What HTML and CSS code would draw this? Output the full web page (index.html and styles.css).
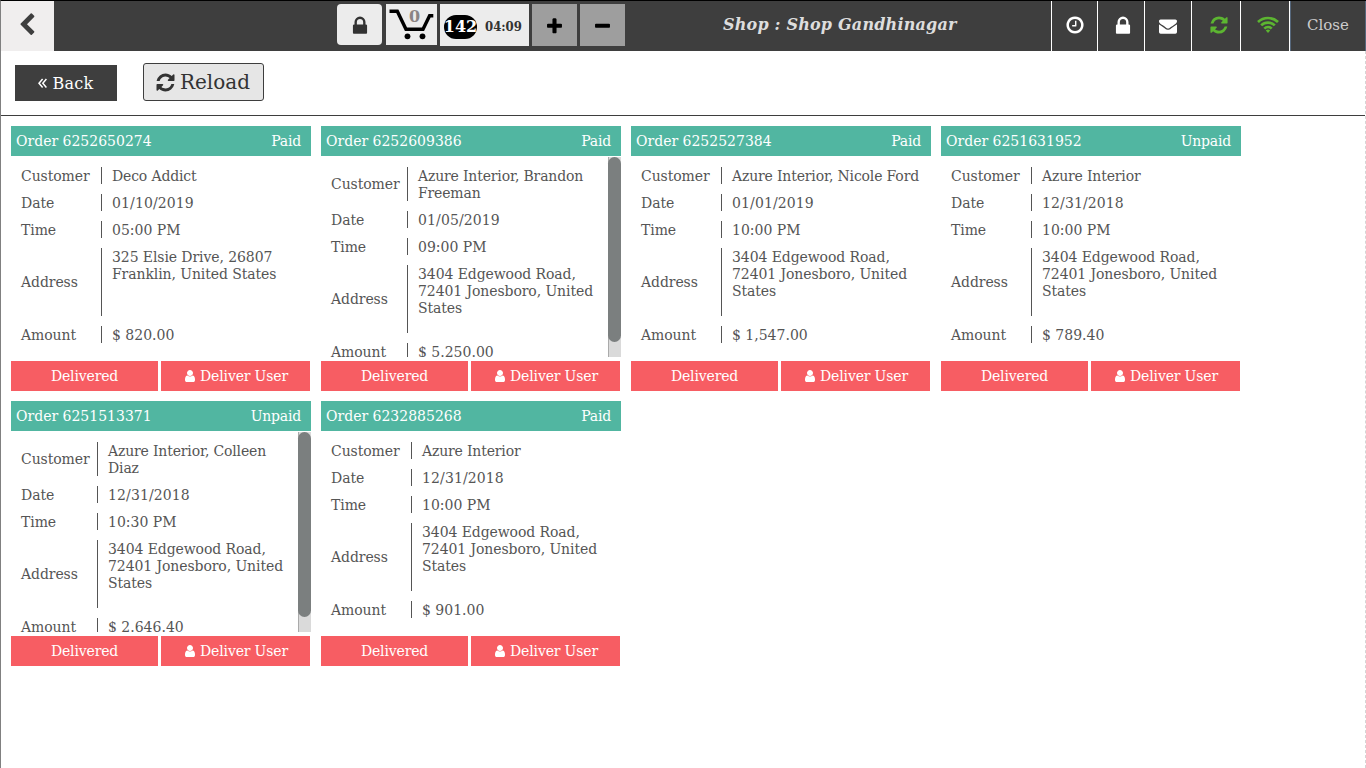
FILE: index.html
```html
<!DOCTYPE html>
<html lang="en">
<head>
<meta charset="utf-8">
<title>Shop Gandhinagar</title>
<link rel="stylesheet" href="styles.css">
</head>
<body>
<svg class="defs" aria-hidden="true">
<symbol id="lock" viewBox="0 0 1792 1792"><path d="M640 768h512v-192q0-106-75-181t-181-75-181 75-75 181v192zm832 96v576q0 40-28 68t-68 28h-960q-40 0-68-28t-28-68v-576q0-40 28-68t68-28h32v-192q0-184 132-316t316-132 316 132 132 316v192h32q40 0 68 28t28 68z"/></symbol>
<symbol id="chevron" viewBox="0 0 1792 1792"><path d="M1427 301l-531 531 531 531q19 19 19 45t-19 45l-166 166q-19 19-45 19t-45-19l-742-742q-19-19-19-45t19-45l742-742q19-19 45-19t45 19l166 166q19 19 19 45t-19 45z"/></symbol>
<symbol id="plus" viewBox="0 0 1792 1792"><path d="M1600 736v192q0 40-28 68t-68 28h-416v416q0 40-28 68t-68 28h-192q-40 0-68-28t-28-68v-416h-416q-40 0-68-28t-28-68v-192q0-40 28-68t68-28h416v-416q0-40 28-68t68-28h192q40 0 68 28t28 68v416h416q40 0 68 28t28 68z"/></symbol>
<symbol id="minus" viewBox="0 0 1792 1792"><path d="M1600 736v192q0 40-28 68t-68 28h-1216q-40 0-68-28t-28-68v-192q0-40 28-68t68-28h1216q40 0 68 28t28 68z"/></symbol>
<symbol id="clock" viewBox="0 0 1792 1792"><path d="M1024 544v448q0 14-9 23t-23 9h-320q-14 0-23-9t-9-23v-64q0-14 9-23t23-9h224v-352q0-14 9-23t23-9h64q14 0 23 9t9 23zm416 352q0-148-73-273t-198-198-273-73-273 73-198 198-73 273 73 273 198 198 273 73 273-73 198-198 73-273zm224 0q0 209-103 385.500t-279.500 279.500-385.500 103-385.500-103-279.500-279.500-103-385.500 103-385.500 279.500-279.500 385.500-103 385.500 103 279.500 279.500 103 385.500z"/></symbol>
<symbol id="mail" viewBox="0 0 1792 1792"><path d="M1792 710v794q0 66-47 113t-113 47h-1472q-66 0-113-47t-47-113v-794q44 49 101 87 362 246 497 345 57 42 92.500 65.500t94.500 48 110 24.500h2q51 0 110-24.500t94.500-48 92.500-65.500q170-123 498-345 57-39 100-87zm0-294q0 79-49 151t-122 123q-376 261-468 325-10 7-42.500 31t-54 38.800-52 32.500-57.500 27-50 9h-2q-23 0-50-9t-57.500-27-52-32.500-54-38.800-42.500-31q-91-64-262-182.500t-205-142.500q-62-42-117-115.500t-55-136.500q0-78 41.500-130t118.500-52h1472q65 0 112.500 47t47.500 113z"/></symbol>
<symbol id="refresh" viewBox="0 0 1792 1792"><path d="M1639 1056q0 5-1 7-64 268-268 434.500t-478 166.500q-146 0-282.500-55t-243.500-157l-129 129q-19 19-45 19t-45-19-19-45v-448q0-26 19-45t45-19h448q26 0 45 19t19 45-19 45l-137 137q71 66 161 102t187 36q134 0 250-65t186-179q11-17 53-117 8-23 30-23h192q13 0 22.500 9.500t9.500 22.500zm25-800v448q0 26-19 45t-45 19h-448q-26 0-45-19t-19-45 19-45l138-138q-148-137-349-137-134 0-250 65t-186 179q-11 17-53 117-8 23-30 23h-199q-13 0-22.500-9.500t-9.500-22.500v-7q65-268 270-434.500t480-166.500q146 0 284 55.500t245 156.500l130-129q19-19 45-19t45 19 19 45z"/></symbol>
<symbol id="user" viewBox="0 0 1792 1792"><path d="M1536 1399q0 109-62.500 187t-150.500 78h-854q-88 0-150.500-78t-62.500-187q0-85 8.500-160.500t31.500-152 58.500-131 94-89 134.500-34.500q131 128 313 128t313-128q76 0 134.500 34.500t94 89 58.500 131 31.500 152 8.500 160.500zm-256-887q0 159-112.500 271.500t-271.500 112.500-271.500-112.500-112.500-271.500 112.500-271.500 271.500-112.500 271.500 112.500 112.500 271.500z"/></symbol>
<symbol id="wifi" viewBox="0 0 22 17"><g fill="none" stroke="currentColor" stroke-width="2.700"><path d="M1 6a14.500 14.500 0 0 1 20 0M4.200 9.400a9.700 9.700 0 0 1 13.600 0M7.300 12.600a5.300 5.300 0 0 1 7.400 0"/></g><path d="M11 17l-2.200-2.400a3 3 0 0 1 4.400 0z"/></symbol>
<symbol id="angles" viewBox="0 0 9 11"><path d="M4.600 1L1 5.200l3.600 4.200M8.400 1L4.800 5.200l3.600 4.200" fill="none" stroke="currentColor" stroke-width="1.500"/></symbol>
<symbol id="cart" viewBox="0 0 46 32"><path d="M.5 2.200h7.800l8.700 18.100h17L40.600 6.800h3.700" fill="none" stroke="currentColor" stroke-width="3.400"/><circle cx="18.500" cy="27.300" r="2.900"/><circle cx="33.500" cy="27.300" r="2.900"/></symbol>
</svg>
<div class="app">
<header class="topbar">
<a class="nav-back"><svg class="ic24"><use href="#chevron"/></svg></a>
<div class="tools">
<button class="tool lock"><svg class="ic22"><use href="#lock"/></svg></button>
<div class="tool cart"><svg class="cart-icon"><use href="#cart"/></svg><span class="cart-count">0</span></div>
<div class="tool timer"><span class="count">142</span><span class="elapsed">04:09</span></div>
<button class="tool step"><svg class="ic19"><use href="#plus"/></svg></button>
<button class="tool step"><svg class="ic19"><use href="#minus"/></svg></button>
</div>
<div class="shop">Shop : Shop Gandhinagar</div>
<nav class="status">
<a class="cell c1"><svg class="ic20"><use href="#clock"/></svg></a>
<a class="cell c2"><svg class="ic22"><use href="#lock"/></svg></a>
<a class="cell c3"><svg class="ic18"><use href="#mail"/></svg></a>
<a class="cell c4 green"><svg class="ic20"><use href="#refresh"/></svg></a>
<a class="cell c5 green"><svg class="wifi"><use href="#wifi"/></svg></a>
<a class="cell close">Close</a>
</nav>
</header>
<main class="page">
<div class="actions">
<button class="back"><svg class="angles"><use href="#angles"/></svg>Back</button>
<button class="reload"><svg class="ic21"><use href="#refresh"/></svg>Reload</button>
</div>
<section class="orders" id="orders"></section>
</main>
</div>
<script src="orders.js"></script>
</body>
</html>
```
FILE: styles.css
```css
* { box-sizing: border-box; }
body { margin: 0; background: #fff; color: #555; font: 14px/17px "DejaVu Serif", serif; overflow: hidden; }
button { border: 0; margin: 0; padding: 0; font: inherit; color: inherit; letter-spacing: inherit; }
svg { display: block; fill: currentColor; flex: none; }
.defs { position: absolute; width: 0; height: 0; }
.ic24 { width: 24px; height: 24px; }
.ic22 { width: 22px; height: 22px; }
.ic21 { width: 21px; height: 21px; }
.ic20 { width: 20px; height: 20px; }
.ic19 { width: 19px; height: 19px; }
.ic18 { width: 18px; height: 18px; }
.app { height: 768px; border-left: 1px solid #808080; border-top: 1px solid #000; display: flex; flex-direction: column; }
.topbar { height: 50px; background: #3e3e3e; display: flex; flex: none; }
.nav-back { width: 53px; background: #f0eeee; color: #3e3e3e; display: flex; align-items: center; justify-content: center; padding: 0 2px 3px 0; }
.tools { display: flex; align-items: flex-start; padding-top: 3px; margin-left: 283px; width: 291px; }
.tool { display: flex; flex: none; align-items: center; justify-content: center; background: #ececec; color: #333; height: 42px; }
.lock { width: 45px; height: 41px; border-radius: 4px; margin-right: 4px; padding: 3px 0 0 1px; }
.cart { width: 51px; height: 41px; margin-right: 3px; position: relative; color: #000; }
.cart-icon { width: 46px; height: 32px; }
.cart-count { position: absolute; left: 23px; top: 3px; font: bold 16px/20px "DejaVu Serif", serif; color: #8b8484; }
.timer { width: 89px; margin-right: 3px; justify-content: flex-start; padding: 3px 0 0 4px; }
.count { width: 33px; height: 24px; border-radius: 12px; background: #000; color: #fff; font: bold 16px/24px "DejaVu Serif", serif; display: flex; justify-content: center; }
.elapsed { margin-left: 8px; font: bold 13px/20px "DejaVu Serif Condensed", "DejaVu Serif", serif; font-stretch: condensed; }
.step { width: 45px; background: #9e9e9e; color: #000; margin-right: 3px; padding-top: 2px; }
.shop { margin-left: 95px; font: italic bold 16px/48px "DejaVu Serif", serif; letter-spacing: .19px; color: #ddd; white-space: nowrap; }
.status { display: flex; margin-left: auto; }
.cell { border-left: 1px solid #fff; color: #fff; display: flex; align-items: center; justify-content: center; padding-bottom: 2px; }
.c1 { width: 46px; }
.c2 { width: 47px; padding: 0 0 1px 4px; }
.c3 { width: 47px; padding-bottom: 1px; }
.c4 { width: 49px; padding-left: 5px; }
.c5 { width: 49px; padding-left: 5px; padding-bottom: 3px; }
.green { color: #5cb531; }
.wifi { width: 22px; height: 17px; }
.close { width: 77px; color: #ccc; font-size: 15px; box-shadow: inset 1px 0 #56677c, inset -1px 0 #56677c; }
.page { flex: 1; border-right: 1px dashed #d5d5d5; }
.actions { height: 65px; border-bottom: 1px solid #3e3e3e; display: flex; align-items: flex-start; padding: 12px 14px; gap: 26px; }
.back { width: 102px; height: 36px; margin-top: 2px; background: #3e3e3e; color: #fff; font-size: 16px; letter-spacing: .3px; display: flex; align-items: center; justify-content: center; gap: 5px; }
.angles { width: 9px; height: 11px; margin-top: 1px; }
.reload { width: 121px; height: 38px; background: #e6e6e6; border: 1px solid #3e3e3e; border-radius: 3px; color: #333; font-size: 20px; display: flex; align-items: center; justify-content: center; gap: 4px; padding-right: 2px; }
.orders { display: grid; grid-template-columns: repeat(4, 300px); gap: 10px; padding: 10px; }
.card-head { height: 30px; background: #51b6a1; color: #fff; display: flex; justify-content: space-between; line-height: 30px; padding: 0 10px 0 5px; }
.state { letter-spacing: -.2px; }
.card-body { height: 201px; overflow: hidden; display: flex; }
.fields { flex: 1; padding: 6px 0 0 10px; }
.field { display: grid; grid-template-columns: 80px 1fr; align-items: center; padding: 5px 0; }
.scrolls .field { grid-template-columns: 76px 1fr; }
.label { margin: .5px 0 -.5px; letter-spacing: -.08px; }
.value { display: flow-root; border-left: 1px solid #555; padding-left: 10px; }
.text { display: block; margin: 1px 0 -1px; }
.customer .text { letter-spacing: -.16px; }
.address .text { letter-spacing: -.09px; }
.date .text { letter-spacing: .12px; }
.address .value { height: 68px; }
.scrollbar { width: 13px; height: 200px; margin-top: 1px; background: #dadada; border-left: 1px solid #aaa; }
.thumb { width: 13px; height: 185px; margin-left: -1px; border-radius: 7px; background: #7b7f7f; }
.card-foot { display: grid; grid-template-columns: 147px 149px; gap: 3px; margin-top: 4px; }
.deliver { height: 30px; background: #f75d63; color: #fff; letter-spacing: -.15px; display: flex; align-items: center; justify-content: center; gap: 3px; }
.ic-user { width: 14px; height: 14px; }
```
FILE: orders.js
```js
const road = "3404 Edgewood Road, 72401 Jonesboro, United States";
const orders = [
  ["6252650274", "Paid", "Deco Addict", "01/10/2019", "05:00 PM", "325 Elsie Drive, 26807 Franklin, United States", "$ 820.00"],
  ["6252609386", "Paid", "Azure Interior, Brandon Freeman", "01/05/2019", "09:00 PM", road, "$ 5.250.00", true],
  ["6252527384", "Paid", "Azure Interior, Nicole Ford", "01/01/2019", "10:00 PM", road, "$ 1,547.00"],
  ["6251631952", "Unpaid", "Azure Interior", "12/31/2018", "10:00 PM", road, "$ 789.40"],
  ["6251513371", "Unpaid", "Azure Interior, Colleen Diaz", "12/31/2018", "10:30 PM", road, "$ 2.646.40", true],
  ["6232885268", "Paid", "Azure Interior", "12/31/2018", "10:00 PM", road, "$ 901.00"]
];
const labels = ["Customer", "Date", "Time", "Address", "Amount"];

document.getElementById("orders").innerHTML = orders.map(o => `
<article class="card${o[7] ? " scrolls" : ""}">
  <div class="card-head"><span>Order ${o[0]}</span><span class="state">${o[1]}</span></div>
  <div class="card-body">
    <div class="fields">${labels.map((l, i) => `<div class="field ${l.toLowerCase()}"><span class="label">${l}</span><div class="value"><span class="text">${o[i + 2]}</span></div></div>`).join("")}</div>
    ${o[7] ? '<div class="scrollbar"><div class="thumb"></div></div>' : ""}
  </div>
  <div class="card-foot">
    <button class="deliver">Delivered</button>
    <button class="deliver"><svg class="ic-user"><use href="#user"/></svg>Deliver User</button>
  </div>
</article>`).join("");
```
